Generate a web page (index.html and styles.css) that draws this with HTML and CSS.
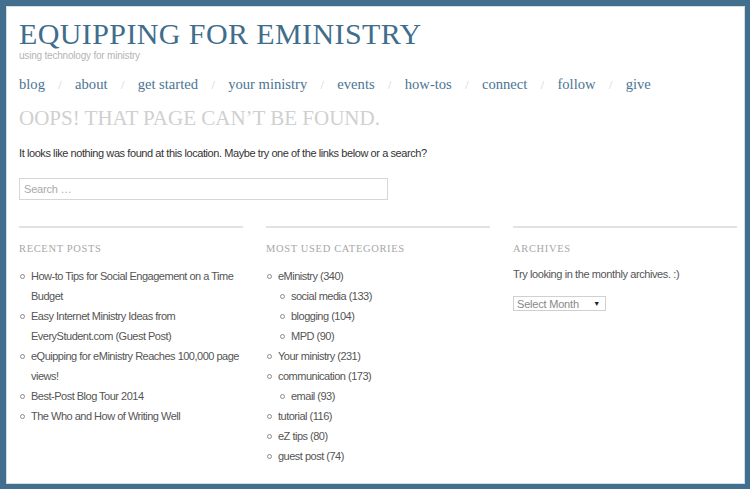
FILE: index.html
```html
<!DOCTYPE html>
<html>
<head>
<meta charset="utf-8">
<link rel="stylesheet" href="styles.css">
</head>
<body>
<div class="page">
  <header class="site-header">
    <h1 class="site-title">EQUIPPING FOR EMINISTRY</h1>
    <p class="tagline">using technology for ministry</p>
    <nav class="nav">
      <a>blog</a><span class="sep">/</span>
      <a>about</a><span class="sep">/</span>
      <a>get started</a><span class="sep">/</span>
      <a>your ministry</a><span class="sep">/</span>
      <a>events</a><span class="sep">/</span>
      <a>how-tos</a><span class="sep">/</span>
      <a>connect</a><span class="sep">/</span>
      <a>follow</a><span class="sep">/</span>
      <a>give</a>
    </nav>
  </header>
  <main class="content">
    <h2 class="page-title">OOPS! THAT PAGE CAN’T BE FOUND.</h2>
    <p class="intro">It looks like nothing was found at this location. Maybe try one of the links below or a search?</p>
    <div class="search"><span class="placeholder">Search …</span></div>
    <div class="widgets">
      <section class="widget">
        <h3 class="widget-title">RECENT POSTS</h3>
        <ul class="list">
          <li>How-to Tips for Social Engagement on a Time Budget</li>
          <li>Easy Internet Ministry Ideas from EveryStudent.com (Guest Post)</li>
          <li>eQuipping for eMinistry Reaches 100,000 page views!</li>
          <li>Best-Post Blog Tour 2014</li>
          <li>The Who and How of Writing Well</li>
        </ul>
      </section>
      <section class="widget">
        <h3 class="widget-title">MOST USED CATEGORIES</h3>
        <ul class="list">
          <li>eMinistry (340)
            <ul class="list sub">
              <li>social media (133)</li>
              <li>blogging (104)</li>
              <li>MPD (90)</li>
            </ul>
          </li>
          <li>Your ministry (231)</li>
          <li>communication (173)
            <ul class="list sub">
              <li>email (93)</li>
            </ul>
          </li>
          <li>tutorial (116)</li>
          <li>eZ tips (80)</li>
          <li>guest post (74)</li>
        </ul>
      </section>
      <section class="widget">
        <h3 class="widget-title">ARCHIVES</h3>
        <p class="archive-text">Try looking in the monthly archives. :)</p>
        <div class="select"><span>Select Month</span><span class="arrow">▼</span></div>
      </section>
    </div>
  </main>
</div>
</body>
</html>
```
FILE: styles.css
```css
html, body {
  margin: 0;
  padding: 0;
}
body {
  background: #416f8d;
  padding: 6px 5px 5px 6px;
  font-family: "Liberation Sans", Arial, sans-serif;
}
.page {
  background: #fff;
  height: 478px;
  box-sizing: border-box;
  border: 1px solid #d5dde3;
  padding: 0 7px 0 12px;
  overflow: hidden;
}
.site-title {
  margin: 0;
  padding-top: 10px;
  font-family: "Liberation Serif", "Times New Roman", serif;
  font-weight: normal;
  font-size: 30px;
  line-height: 33px;
  color: #3f6d8c;
  letter-spacing: 0.4px;
}
.tagline {
  margin: 0;
  font-size: 10px;
  line-height: 12px;
  color: #b5b5b5;
  letter-spacing: -0.2px;
}
.nav {
  display: flex;
  align-items: baseline;
  margin-top: 12px;
  font-family: "Liberation Serif", "Times New Roman", serif;
  font-size: 14.6px;
  line-height: 20px;
  color: #4b7593;
}
.nav .sep {
  color: #d0d0d0;
  font-size: 12px;
  margin: 0 13.4px;
}
.page-title {
  margin: 10px 0 0;
  font-family: "Liberation Serif", "Times New Roman", serif;
  font-weight: normal;
  font-size: 21px;
  line-height: 26px;
  color: #d0d0d0;
}
.intro {
  margin: 15px 0 0;
  font-size: 11px;
  line-height: 14px;
  letter-spacing: -0.42px;
  color: #333;
}
.search {
  margin-top: 18px;
  width: 369px;
  height: 22px;
  box-sizing: border-box;
  border: 1px solid #d6d6d6;
  padding: 4px 4px;
  font-size: 11px;
  line-height: 13px;
  letter-spacing: -0.2px;
  color: #aaa;
}
.widgets {
  display: grid;
  grid-template-columns: repeat(3, 224px);
  column-gap: 23px;
  margin-top: 26px;
}
.widget {
  border-top: 2px solid #e2e2e2;
}
.widget-title {
  margin: 14px 0 0;
  font-family: "Liberation Serif", "Times New Roman", serif;
  font-weight: normal;
  font-size: 10.5px;
  line-height: 14px;
  letter-spacing: 0.65px;
  color: #a8a8a8;
}
.list {
  margin: 10px 0 0;
  padding: 0 0 0 12px;
  list-style: none;
  font-size: 11px;
  line-height: 20px;
  letter-spacing: -0.5px;
  color: #555;
}
.list li {
  position: relative;
}
.list li::before {
  content: "";
  position: absolute;
  left: -11px;
  top: 8px;
  width: 3px;
  height: 3px;
  border: 1px solid #8a8a8a;
  border-radius: 50%;
}
.list.sub {
  margin: 0;
  padding-left: 13px;
}
.archive-text {
  margin: 11px 0 0;
  font-size: 11px;
  line-height: 14px;
  letter-spacing: -0.4px;
  color: #555;
}
.select {
  margin-top: 15px;
  width: 93px;
  height: 15px;
  box-sizing: border-box;
  border: 1px solid #d0d0d0;
  display: flex;
  justify-content: space-between;
  align-items: center;
  padding: 0 5px 0 3px;
  font-size: 11px;
  letter-spacing: -0.2px;
  color: #888;
}
.select .arrow {
  font-size: 7px;
  color: #222;
}
```
